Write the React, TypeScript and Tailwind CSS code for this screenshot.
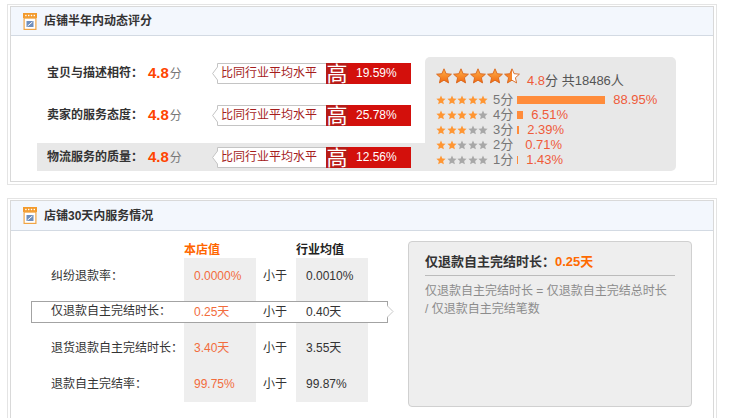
import type { ReactNode } from 'react'

const STAR =
  '8,0.8 10.12,5.69 15.42,6.19 11.42,9.71 12.59,14.91 8,12.2 3.41,14.91 4.58,9.71 0.58,6.19 5.88,5.69'

const scores = [
  { label: '宝贝与描述相符：', value: '4.8', pct: '19.59%' },
  { label: '卖家的服务态度：', value: '4.8', pct: '25.78%' },
  { label: '物流服务的质量：', value: '4.8', pct: '12.56%' },
]

const dist = [
  { n: 5, pct: 88.95 },
  { n: 4, pct: 6.51 },
  { n: 3, pct: 2.39 },
  { n: 2, pct: 0.71 },
  { n: 1, pct: 1.43 },
]

const service = [
  { label: '纠纷退款率：', mine: '0.0000%', avg: '0.0010%' },
  { label: '仅退款自主完结时长：', mine: '0.25天', avg: '0.40天', active: true },
  { label: '退货退款自主完结时长：', mine: '3.40天', avg: '3.55天' },
  { label: '退款自主完结率：', mine: '99.75%', avg: '99.87%' },
]

function ShopIcon() {
  return (
    <svg width="14" height="17" viewBox="0 0 14 17" className="block shrink-0">
      <rect x="0" y="0" width="14" height="5" fill="#f39a2b" />
      <rect x="2.2" y="1.8" width="1.4" height="1.4" fill="#fff" />
      <rect x="5" y="1.8" width="1.4" height="1.4" fill="#fff" />
      <rect x="7.8" y="1.8" width="1.4" height="1.4" fill="#fff" />
      <rect x="10.6" y="1.8" width="1.4" height="1.4" fill="#fff" />
      <rect x="1.1" y="5.1" width="11.8" height="11.3" fill="#fff" stroke="#f1a545" strokeWidth="1.2" />
      <rect x="3.5" y="8" width="7" height="6" fill="#6f8fbd" />
      <path d="M4.6 13 L9.4 9" stroke="#fff" strokeWidth="1" />
    </svg>
  )
}

function BigStar({ half }: { half?: boolean }) {
  return (
    <svg width="16" height="16" viewBox="0 0 16 16" className="block">
      <defs>
        <linearGradient id="bigfill" x1="0" y1="0" x2="0" y2="1">
          <stop offset="0" stopColor="#ffb24c" />
          <stop offset="1" stopColor="#f2690f" />
        </linearGradient>
        <linearGradient id="halffill" x1="0" y1="0" x2="1" y2="0">
          <stop offset="0.5" stopColor="#f7852a" />
          <stop offset="0.5" stopColor="#ffffff" />
        </linearGradient>
      </defs>
      <polygon
        points={STAR}
        fill={half ? 'url(#halffill)' : 'url(#bigfill)'}
        stroke="#d8651c"
        strokeWidth="0.9"
        strokeLinejoin="round"
      />
    </svg>
  )
}

function SmallStar({ on }: { on: boolean }) {
  return (
    <svg width="10" height="10" viewBox="0 0 16 16" className="block">
      <polygon points={STAR} fill={on ? '#ff9633' : '#a8a8a8'} />
    </svg>
  )
}

function Panel({
  title,
  outer,
  header,
  children,
}: {
  title: string
  outer: string
  header: string
  children: ReactNode
}) {
  return (
    <div className={`ml-[7px] w-[710px] border border-[#e4e4e4] px-[2px] pb-[2px] ${outer}`}>
      <div className="border border-[#d9d9d9]">
        <div className={`flex items-center gap-[7px] border-b border-[#d3dae3] bg-[#f3f7fd] pl-[12px] ${header}`}>
          <ShopIcon />
          <span className="text-[12px] font-bold text-[#333]">{title}</span>
        </div>
        {children}
      </div>
    </div>
  )
}

function ScoreRow({ label, value, pct, grey }: { label: string; value: string; pct: string; grey: boolean }) {
  return (
    <div className={`flex h-[28px] items-center ${grey ? 'bg-[#e8e8e8]' : ''}`}>
      <div className="w-[111px] pl-[10px] font-bold text-[#333]">{label}</div>
      <div className="flex w-[64px] items-baseline">
        <span className="text-[15px] font-bold text-[#ff4400]">{value}</span>
        <span className="ml-[1px] text-[#777]">分</span>
      </div>
      <div className="flex h-[21px]">
        <svg width="6" height="21" viewBox="0 0 6 21" className="block">
          <path d="M6.5 0.5 L5.5 0.5 L5.5 4 L0.6 10.5 L5.5 17 L5.5 20.5 L6.5 20.5 Z" fill="#fff" stroke="#c4c4c4" />
        </svg>
        <div className="flex w-[108px] items-center border-y border-[#c4c4c4] bg-white pl-[3px] text-[#a51d1d]">
          比同行业平均水平
        </div>
        <div className="flex w-[85px] bg-[#d3100c]">
          <div className="flex w-[22px] items-center justify-center bg-[#b81b17] text-[21px] leading-none text-white">
            高
          </div>
          <div className="flex items-center pl-[8px] text-white">{pct}</div>
        </div>
      </div>
    </div>
  )
}

function Cells({ label, mine, avg, inBox }: { label: string; mine: string; avg: string; inBox?: boolean }) {
  return (
    <>
      <div className={inBox ? 'w-[152px] pl-[19px]' : 'flex w-[153px] items-center pl-[20px]'}>{label}</div>
      <div className={`flex w-[72px] items-center pl-[10px] text-[#f26c3d] ${inBox ? '' : 'bg-[#eeeeee]'}`}>{mine}</div>
      <div className="flex w-[40px] items-center pl-[7px]">小于</div>
      <div className={`flex w-[72px] items-center pl-[10px] ${inBox ? '' : 'bg-[#eeeeee]'}`}>{avg}</div>
    </>
  )
}

function Strip() {
  return (
    <div className="flex h-[7px]">
      <div className="w-[153px]" />
      <div className="w-[72px] bg-[#eeeeee]" />
      <div className="w-[40px]" />
      <div className="w-[72px] bg-[#eeeeee]" />
    </div>
  )
}

export default function App() {
  return (
    <div className="relative h-[418px] w-[731px] overflow-hidden bg-white pt-[4px] font-['Liberation_Sans','Noto_Sans_CJK_SC',sans-serif] text-[12px] text-[#333]">
      <Panel title="店铺半年内动态评分" outer="pt-[1px]" header="h-[29px]">
        <div className="flex h-[145px] items-start pl-[26px] pt-[21px]">
          <div className="flex w-[388px] flex-col gap-[14px] pt-[2px]">
            {scores.map((s, i) => (
              <ScoreRow key={i} label={s.label} value={s.value} pct={s.pct} grey={i === 2} />
            ))}
          </div>
          <div className="h-[114px] w-[251px] rounded-[5px] rounded-bl-none bg-[#e8e8e8] pl-[11px] pt-[9px]">
            <div className="flex h-[20px] items-center">
              <div className="flex gap-[1px]">
                <BigStar />
                <BigStar />
                <BigStar />
                <BigStar />
                <BigStar half />
              </div>
              <div className="ml-[7px] mt-[9px] text-[13px] leading-none text-[#555]">
                <span className="text-[#ef5b3a]">4.8</span>分 共18486人
              </div>
            </div>
            <div className="mt-[6px] flex flex-col">
              {dist.map((d) => (
                <div key={d.n} className="flex h-[15px] items-center text-[13px] leading-[15px]">
                  <div className="flex gap-[0.5px]">
                    {[1, 2, 3, 4, 5].map((k) => (
                      <SmallStar key={k} on={k <= d.n} />
                    ))}
                  </div>
                  <span className="ml-[5px] text-[#777]">{d.n}分</span>
                  <div
                    className="ml-[4px] h-[8px] bg-[#ff8c3b]"
                    style={{ width: Math.floor(d.pct) }}
                  />
                  <span className="ml-[8px] text-[#ef5b3a]">{d.pct.toFixed(2)}%</span>
                </div>
              ))}
            </div>
          </div>
        </div>
      </Panel>

      <Panel title="店铺30天内服务情况" outer="mt-[13px] pt-[1px]" header="h-[30px]">
        <div className="flex h-[200px] items-start pl-[20px] pt-[10px]">
          <div className="w-[377px]">
            <div className="flex h-[17px] items-center font-bold">
              <div className="w-[153px]" />
              <div className="w-[72px] text-[#ff6600]">本店值</div>
              <div className="w-[40px]" />
              <div className="w-[72px] text-[#222]">行业均值</div>
            </div>
            {service.map((r, i) =>
              r.active ? (
                <div key={i} className="flex h-[36px] flex-col">
                  <Strip />
                  <div className="relative flex h-[22px] w-[357px] border border-[#a3a3a3] bg-white">
                    <Cells label={r.label} mine={r.mine} avg={r.avg} inBox />
                    <svg width="7" height="13" viewBox="0 0 7 13" className="absolute right-[-7px] top-[3px] block">
                      <path d="M0 0.5 L6 6.5 L0 12.5 Z" fill="#fff" />
                      <path d="M0 0.5 L6 6.5 L0 12.5" fill="none" stroke="#c8c8c8" />
                    </svg>
                  </div>
                  <Strip />
                </div>
              ) : (
                <div key={i} className="flex h-[36px]">
                  <Cells label={r.label} mine={r.mine} avg={r.avg} />
                </div>
              ),
            )}
          </div>
          <div className="h-[166px] w-[284px] rounded-[4px] border border-[#d0d0d0] bg-[#eeeeee] px-[16px] pt-[11px]">
            <div className="text-[13px] font-bold leading-[18px] text-[#333]">
              仅退款自主完结时长：<span className="text-[#ff6a00]">0.25天</span>
            </div>
            <div className="mt-[4px] border-t border-[#bbbbbb]" />
            <div className="mt-[6px] leading-[18px] text-[#8c8c8c]">
              仅退款自主完结时长 = 仅退款自主完结总时长
              <br />/ 仅退款自主完结笔数
            </div>
          </div>
        </div>
      </Panel>
    </div>
  )
}
